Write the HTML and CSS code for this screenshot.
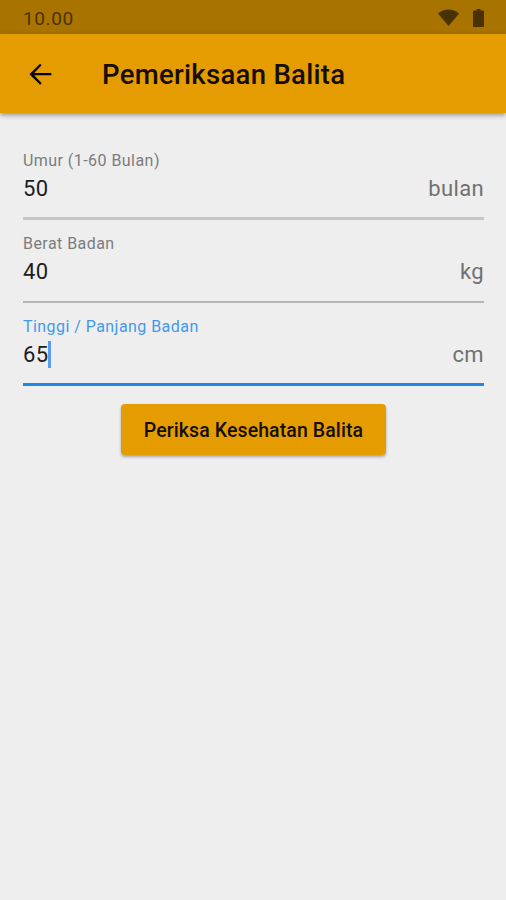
FILE: index.html
```
<!DOCTYPE html>
<html lang="id">
<head>
  <meta charset="UTF-8" />
  <meta name="viewport" content="width=device-width, initial-scale=1.0" />
  <title>Pemeriksaan Balita</title>
  <link rel="stylesheet" href="styles.css">
</head>

<body>

  <div class="status-bar">
    <span>10.00</span>
    <div class="status-icons">
      <svg width="21" height="17" viewBox="0 0 21 17"><path d="M0 4.500C6-1 15-1 21 4.500L10.500 17z"/></svg>
      <svg width="11" height="18" viewBox="0 0 11 18"><path d="M3.500 0h4v1.500H10q1 0 1 1V17q0 1-1 1H1q-1 0-1-1V2.500q0-1 1-1h2.500z"/></svg>
    </div>
  </div>

  <header class="app-bar">
    <button class="btn-back" type="button" aria-label="Kembali">
      <svg width="32" height="32" viewBox="0 0 24 24"><path d="M20.500 11.200H7.600l5.600-5.700L12.100 4.300l-8 7.800 8 8 1.200-1.200L7.600 12.900h12.900z"/></svg>
    </button>
    <h1>Pemeriksaan Balita</h1>
  </header>

  <form class="form">
    <div class="field">
      <label>Umur (1-60 Bulan)</label>
      <div class="field-row"><span class="value">50</span><span class="unit">bulan</span></div>
    </div>
    <div class="field">
      <label>Berat Badan</label>
      <div class="field-row"><span class="value">40</span><span class="unit">kg</span></div>
    </div>
    <div class="field active">
      <label>Tinggi / Panjang Badan</label>
      <div class="field-row"><span class="value">65</span><span class="unit">cm</span></div>
    </div>
    <button class="btn-periksa" type="button">Periksa Kesehatan Balita</button>
  </form>

</body>
</html>
```
FILE: styles.css
```
* {
  margin: 0;
  padding: 0;
  box-sizing: border-box;
}

body {
  min-height: 100vh;
  font-family: Roboto, sans-serif;
  background-color: #eeeeee;
  color: #1c1c1c;
}

svg {
  display: block;
}

.status-bar {
  height: 34px;
  padding: 2px 22px 0 23px;
  display: flex;
  justify-content: space-between;
  align-items: center;
  background-color: #a97300;
  color: #4a3200;
  font-size: 19px;
  letter-spacing: 0.6px;
}

.status-icons {
  display: flex;
  align-items: center;
  gap: 14px;
  margin-top: -1px;
  fill: #4a3200;
}

.app-bar {
  height: 79px;
  padding-left: 24px;
  display: flex;
  align-items: center;
  background-color: #e59c00;
  box-shadow: 0 2px 5px rgba(0, 0, 0, 0.4);
}

.btn-back {
  margin-right: 46px;
  border: none;
  background: none;
}

h1 {
  padding-top: 2px;
  font-size: 27.5px;
  font-weight: 500;
  letter-spacing: 0.3px;
  color: #150e00;
}

.form {
  padding: 36px 22px 0 23px;
  display: flex;
  flex-direction: column;
}

.field {
  height: 83px;
}

label {
  display: block;
  height: 24px;
  line-height: 24px;
  font-size: 16px;
  letter-spacing: 0.45px;
  color: #7c7c7c;
}

.field-row {
  height: 47px;
  padding-top: 2px;
  display: flex;
  justify-content: space-between;
  border-bottom: 3px solid #c6c6c6;
  font-size: 22px;
  letter-spacing: 0.35px;
  line-height: 28px;
}

.field:nth-child(2) .field-row {
  height: 46.5px;
  border-bottom: 2px solid #b6b6b6;
}

.unit {
  color: #717171;
}

.active label {
  color: #4498ec;
}

.active .field-row {
  border-bottom: 3px solid #1f88e5;
}

.active .value {
  height: 27px;
  line-height: 28px;
  border-right: 3px solid #5c9cec;
}

.btn-periksa {
  width: 265px;
  height: 51px;
  margin-top: 6px;
  padding-top: 1px;
  align-self: center;
  border: none;
  border-radius: 4px;
  background-color: #e59c00;
  box-shadow: 0 2px 3px rgba(0, 0, 0, 0.3);
  color: #150e00;
  font-family: Roboto, sans-serif;
  font-size: 19.5px;
  font-weight: 500;
  letter-spacing: 0.1px;
}
```
